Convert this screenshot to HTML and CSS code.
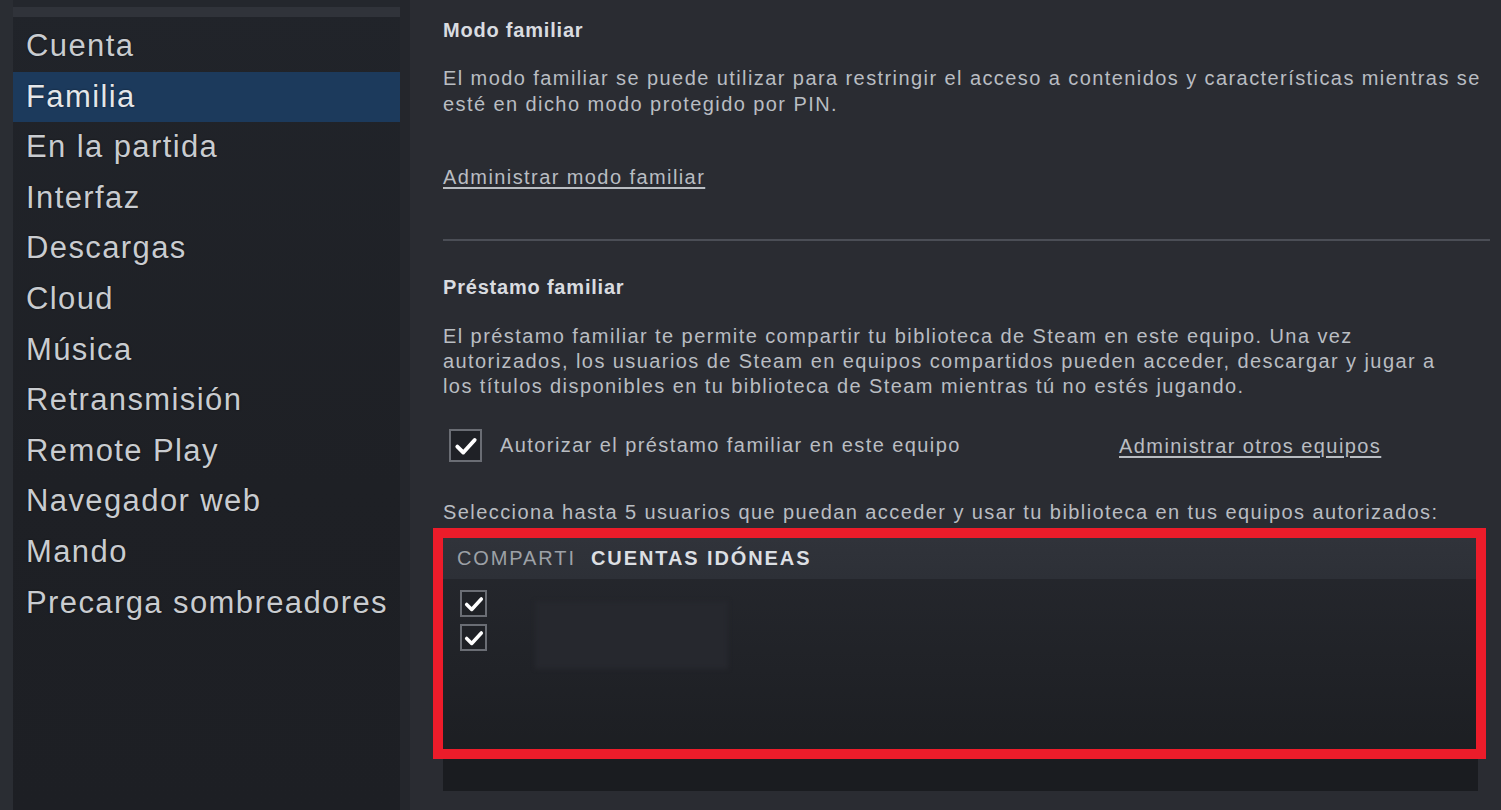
FILE: index.html
```html
<!DOCTYPE html>
<html lang="es">
<head>
<meta charset="utf-8">
<title>Familia</title>
<link rel="stylesheet" href="styles.css">
</head>
<body>
<div class="app">
  <div class="gutter"></div>
  <nav class="sidebar">
    <div class="sidebar-top"></div>
    <ul class="menu">
      <li class="item">Cuenta</li>
      <li class="item active">Familia</li>
      <li class="item">En la partida</li>
      <li class="item">Interfaz</li>
      <li class="item">Descargas</li>
      <li class="item">Cloud</li>
      <li class="item">Música</li>
      <li class="item">Retransmisión</li>
      <li class="item">Remote Play</li>
      <li class="item">Navegador web</li>
      <li class="item">Mando</li>
      <li class="item">Precarga sombreadores</li>
    </ul>
  </nav>
  <div class="divider"></div>
  <main class="content">
    <h2 class="heading h-first">Modo familiar</h2>
    <p class="para p-first">El modo familiar se puede utilizar para restringir el acceso a contenidos y características mientras se<br>esté en dicho modo protegido por PIN.</p>
    <a class="link link-first">Administrar modo familiar</a>
    <div class="sep"></div>
    <h2 class="heading h-second">Préstamo familiar</h2>
    <p class="para p-second">El préstamo familiar te permite compartir tu biblioteca de Steam en este equipo. Una vez<br>autorizados, los usuarios de Steam en equipos compartidos pueden acceder, descargar y jugar a<br>los títulos disponibles en tu biblioteca de Steam mientras tú no estés jugando.</p>
    <div class="auth-row">
      <label class="auth">
        <span class="cb cb-big">
          <svg viewBox="0 0 24 24" class="tick"><path d="M4 12.5 L9.5 18 L20 6.5" fill="none" stroke="#fff" stroke-width="3.6" stroke-linecap="round" stroke-linejoin="round"/></svg>
        </span>
        <span class="auth-text">Autorizar el préstamo familiar en este equipo</span>
      </label>
      <a class="link">Administrar otros equipos</a>
    </div>
    <p class="select-text">Selecciona hasta 5 usuarios que puedan acceder y usar tu biblioteca en tus equipos autorizados:</p>
    <div class="table-wrap">
      <div class="table">
        <div class="thead">
          <span class="th th-share">COMPARTI</span>
          <span class="th th-acc">CUENTAS IDÓNEAS</span>
        </div>
        <div class="tbody">
          <div class="rows">
            <span class="cb cb-small"><svg viewBox="0 0 24 24" class="tick"><path d="M4 12.5 L9.5 18 L20 6.5" fill="none" stroke="#fff" stroke-width="3.8" stroke-linecap="round" stroke-linejoin="round"/></svg></span>
            <span class="cb cb-small"><svg viewBox="0 0 24 24" class="tick"><path d="M4 12.5 L9.5 18 L20 6.5" fill="none" stroke="#fff" stroke-width="3.8" stroke-linecap="round" stroke-linejoin="round"/></svg></span>
          </div>
          <div class="redacted"></div>
        </div>
      </div>
      <div class="tfoot"></div>
      <div class="highlight"></div>
    </div>
  </main>
</div>
</body>
</html>
```
FILE: styles.css
```css
* { box-sizing: border-box; }
html, body {
  margin: 0;
  padding: 0;
  width: 1501px;
  height: 810px;
  overflow: hidden;
  background: #2b2e35;
  font-family: "Liberation Sans", Arial, sans-serif;
}
.app {
  display: flex;
  height: 810px;
}
.gutter {
  width: 13px;
  background: #2a2d33;
  flex: none;
}
.sidebar {
  width: 387px;
  flex: none;
  background: linear-gradient(180deg, #21242a 0%, #1e2025 60%, #1d1f24 100%);
  display: flex;
  flex-direction: column;
}
.sidebar-top {
  height: 17px;
  border-top: 7px solid #24272d;
  background: #30333a;
  margin-bottom: 4px;
}
.menu {
  list-style: none;
  margin: 0;
  padding: 0;
}
.item {
  height: 50.6px;
  line-height: 50.6px;
  padding-left: 13px;
  font-size: 31px;
  letter-spacing: 1.4px;
  color: #c9ccd0;
  white-space: nowrap;
  text-shadow: 0 0 2px rgba(0, 0, 0, 0.6);
}
.item.active {
  background: #1c3a5c;
  color: #e4e7ea;
}
.divider {
  width: 10px;
  flex: none;
  background: #24262c;
}
.content {
  flex: 1;
  background: #2a2c32;
  padding: 0 23px 0 33px;
  display: flex;
  flex-direction: column;
  align-items: flex-start;
}
.heading {
  margin: 0;
  font-size: 20px;
  letter-spacing: 0.8px;
  font-weight: bold;
  color: #d9dce0;
  line-height: 24px;
}
.h-first { margin-top: 18px; }
.h-second { margin-top: 34px; }
.para {
  margin: 0;
  font-size: 20px;
  letter-spacing: 1.42px;
  color: #b9bdc2;
  line-height: 26px;
  white-space: nowrap;
}
.p-first { margin-top: 23px; }
.p-second { margin-top: 25px; line-height: 25px; }
.link {
  color: #b9bdc2;
  font-size: 20px;
  letter-spacing: 1.42px;
  line-height: 24px;
  text-decoration: underline;
  text-underline-offset: 3px;
  white-space: nowrap;
}
.link-first { margin-top: 48px; }
.sep {
  margin-top: 50px;
  width: 1047px;
  height: 2px;
  background: #4b4e56;
}
.auth-row {
  margin-top: 30px;
  width: 1045px;
  display: flex;
  align-items: center;
  padding-left: 6px;
}
.auth {
  display: flex;
  align-items: center;
  width: 670px;
}
.cb {
  display: inline-flex;
  align-items: center;
  justify-content: center;
  border: 2px solid #6a6d74;
  background: #1f2126;
  flex: none;
}
.cb-big { width: 33px; height: 33px; }
.cb-big .tick { width: 26px; height: 26px; }
.cb-small { width: 27px; height: 27px; }
.cb-small .tick { width: 22px; height: 22px; }
.auth-text {
  margin-left: 18px;
  font-size: 20px;
  letter-spacing: 1.42px;
  color: #b9bdc2;
  white-space: nowrap;
}
.select-text {
  margin: 38px 0 0;
  font-size: 20px;
  letter-spacing: 1.42px;
  color: #b9bdc2;
  line-height: 24px;
  white-space: nowrap;
}
.table-wrap {
  position: relative;
  margin-top: 14px;
  width: 1035px;
}
.table {
  height: 221px;
  background: linear-gradient(180deg, #26282e 0%, #202227 60%, #1c1e22 100%);
  display: flex;
  flex-direction: column;
}
.thead {
  height: 41px;
  background: linear-gradient(180deg, #30333a, #2d3037);
  display: flex;
  align-items: center;
  padding-left: 14px;
  font-size: 20px;
  letter-spacing: 1.9px;
}
.th-share { color: #9da1a7; width: 134px; }
.th-acc { color: #dcdfe3; font-weight: bold; letter-spacing: 1.9px; }
.tbody {
  display: flex;
  padding: 11px 0 0 17px;
}
.rows {
  display: flex;
  flex-direction: column;
  gap: 7px;
}
.redacted {
  margin: 11px 0 0 48px;
  width: 193px;
  height: 68px;
  background: #26282e;
  filter: blur(2px);
}
.tfoot {
  height: 32px;
  background: #1a1c20;
}
.highlight {
  position: absolute;
  left: -10px;
  top: -10px;
  width: 1053px;
  height: 231px;
  border: 10px solid #ec1c2a;
  pointer-events: none;
}
```
